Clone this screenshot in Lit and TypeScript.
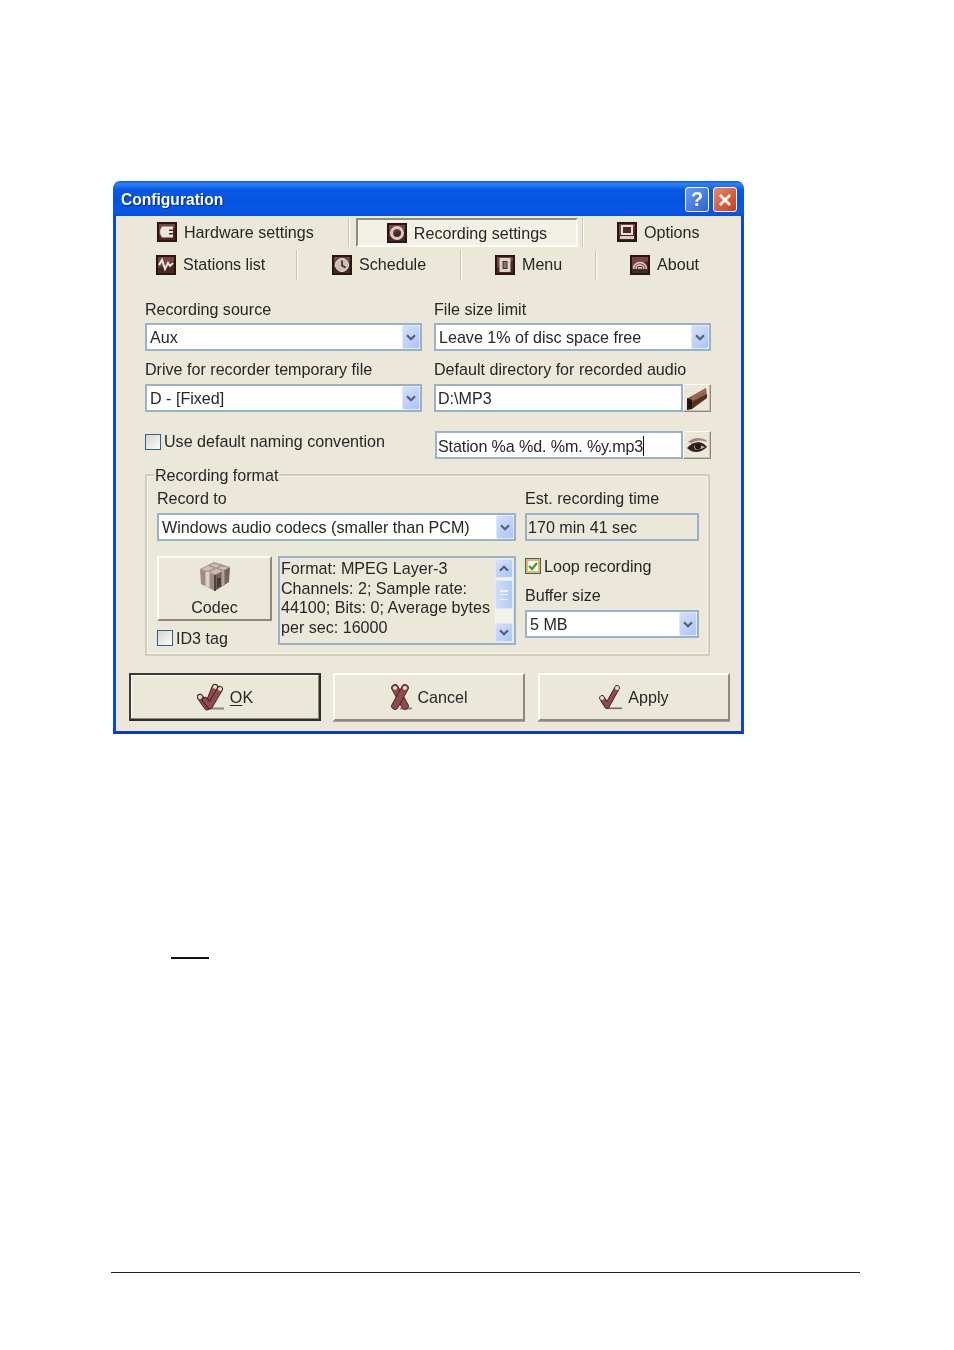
import { LitElement, html, css, svg } from "lit";
import { customElement } from "lit/decorators.js";

const frame = (glyph: unknown) => html`<svg class="ico" width="20" height="20" viewBox="0 0 20 20">
  <rect x="0.5" y="0.5" width="19" height="19" fill="#2c1717" stroke="#241414"/>
  <rect x="2" y="2" width="16" height="16" fill="#7a4343"/>
  <path d="M2 13 L18 6 V18 H2Z" fill="#4c2525"/>
  ${glyph}
</svg>`;

const glyphs: Record<string, unknown> = {
  plug: svg`<path d="M5 4.5 H16 V7.5 H12 V9 H16 V11 H12 V12.5 H16 V15.5 H5 Q3 13 3 10 Q3 7 5 4.5Z" fill="#eee6dc"/>`,
  pulse: svg`<path d="M3 10 L6 5 L9 14 L12 8 L14 11 L17 8" fill="none" stroke="#f0e8e0" stroke-width="2"/>`,
  ring: svg`<circle cx="10" cy="10" r="5.5" fill="none" stroke="#ddc9c3" stroke-width="3"/><circle cx="10" cy="10" r="2.2" fill="#4a2a2a"/>`,
  clock: svg`<circle cx="10" cy="10" r="6.5" fill="#cbbcb6" stroke="#e8e0d8"/><path d="M10 5.5 V10.5 L13.5 12.5" fill="none" stroke="#3d2222" stroke-width="1.6"/>`,
  monitor: svg`<rect x="4" y="3" width="12" height="10" fill="#e8e2d8"/><rect x="6" y="5" width="8" height="6" fill="#4a2a2a"/><rect x="3" y="14" width="14" height="3" fill="#d8cfc4"/>`,
  page: svg`<rect x="4.5" y="3" width="11" height="14" fill="#ddd3c4"/><rect x="7.5" y="6" width="5" height="8" fill="#4b3030"/><path d="M8.5 8 H11.5 M8.5 10 H11.5 M8.5 12 H11.5" stroke="#c9bdb0"/>`,
  arcs: svg`<path d="M3.5 15 A6.5 6.5 0 0 1 16.5 15 M6 15 A4 4 0 0 1 14 15 M8.5 15 A1.5 1.5 0 0 1 11.5 15" transform="translate(0 -1)" fill="none" stroke="#ddd0c8" stroke-width="1.6"/>`,
};

const chevron = html`<svg width="10" height="7" viewBox="0 0 10 7"><path d="M1 1.2 L5 5.2 L9 1.2" fill="none" stroke="#4d6185" stroke-width="2.2"/></svg>`;
const chevronUp = html`<svg width="10" height="7" viewBox="0 0 10 7"><path d="M1 5.8 L5 1.8 L9 5.8" fill="none" stroke="#4d6185" stroke-width="2.2"/></svg>`;

const cube = html`<svg width="34" height="32" viewBox="0 0 34 32">
  <path d="M2 9 L17 15 L17 31 L3 24Z" fill="#9f8b83"/>
  <path d="M17 15 L32 7 L31 22 L17 31Z" fill="#75625e"/>
  <path d="M2 9 L16 2 L32 7 L17 15Z" fill="#a8948c"/>
  <path d="M4 9 L10 6 L16 8 L10 11Z M12 5 L16 3.5 L22 5.5 L18 7.5Z M12 12 L18 9 L24 11 L17 14Z M20 8 L24 6.5 L30 7.5 L26 10Z" fill="#cdbfb8"/>
  <path d="M9.5 12 V27.5" stroke="#dcd3cd" stroke-width="4"/>
  <path d="M25 11 V26" stroke="#b0a29c" stroke-width="3"/>
  <path d="M17 15 V31" stroke="#3f3230" stroke-width="1.5"/>
  <path d="M19 18 H23 V26 L19 28Z" fill="#4a3b38"/>
</svg>`;

const folder = html`<svg width="22" height="24" viewBox="0 0 22 24">
  <path d="M2 12 L20 2 L21 10 L6 18 L2 14Z" fill="#875644"/>
  <path d="M6 10 L20 3 V5 L6 12Z M6 13 L20 6 V7.5 L6 14.5Z" fill="#a0705e"/>
  <path d="M6 16 L21 8 V12 L6 23Z" fill="#54301f"/>
  <path d="M1 12 L6 14 L6 23 L1 24Z" fill="#1f1512"/>
</svg>`;

const eye = html`<svg width="22" height="18" viewBox="0 0 22 18">
  <path d="M2 6 Q10 -1 20 4 L21 6 Q13 2.5 5 7Z" fill="#a8827a"/>
  <path d="M1 12 Q6 6 13 6 Q18 7 21 11 Q16 16 10 16 Q5 16 1 12Z" fill="#35211f"/>
  <path d="M8 10 Q13 8 19 11 Q14 14.5 9 13.5Z" fill="#c8bcb4"/>
  <ellipse cx="12" cy="10.8" rx="3" ry="2.8" fill="#241614"/>
</svg>`;

const stick = (d: string, w = 5) => svg`<path d="${d}" fill="none" stroke="#2e1616" stroke-width="${w + 1.5}" stroke-linecap="round" stroke-linejoin="round"/><path d="${d}" fill="none" stroke="#8f4b4b" stroke-width="${w}" stroke-linecap="round" stroke-linejoin="round"/>`;

const okIcon = html`<svg class="bico" width="28" height="28" viewBox="0 0 28 28">
  <rect x="12" y="24.5" width="15" height="2" fill="#888"/>
  ${stick("M3 14 L10 24 L18 4", 5)}
  ${stick("M8 17 L13 23 L23 6", 4.5)}
  <circle cx="18" cy="4" r="2" fill="#eadcd4"/><circle cx="23" cy="6" r="2" fill="#eadcd4"/><circle cx="3" cy="14" r="2" fill="#eadcd4"/>
</svg>`;

const cancelIcon = html`<svg class="bico" width="22" height="27" viewBox="0 0 22 27">
  <rect x="10" y="23.5" width="12" height="2" fill="#888"/>
  ${stick("M5 4 L15 22", 6)}
  ${stick("M15 4 L5 22", 6)}
  <circle cx="5" cy="4" r="2" fill="#eadcd4"/><circle cx="15" cy="4" r="2" fill="#eadcd4"/>
</svg>`;

const applyIcon = html`<svg class="bico" width="24" height="27" viewBox="0 0 24 27">
  <rect x="8" y="23.5" width="15" height="1.6" fill="#666"/>
  ${stick("M3 14 L8 22 L18 4", 4)}
  <circle cx="18" cy="4" r="2" fill="#eadcd4"/><circle cx="3" cy="14" r="2" fill="#eadcd4"/>
</svg>`;

@customElement("app-root")
export class AppRoot extends LitElement {
  static styles = css`
    :host { display: block; width: 954px; height: 1350px; background: #fff; font-family: "Liberation Sans", Arial, sans-serif; font-size: 16.1px; color: #262626; overflow: hidden; }
    .page { padding-top: 181px; }
    .win { margin-left: 113px; width: 631px; height: 553px; display: flex; flex-direction: column; filter: blur(0.4px); }
    .title { height: 35px; flex: none; display: flex; align-items: center; padding: 2px 7px 0 8px; box-sizing: border-box; border-radius: 7px 7px 0 0; background: linear-gradient(#0a5ae6 0, #2f83f4 8%, #0a58e2 25%, #0553e0 60%, #0758e8 85%, #0a4fd2 100%); color: #fff; font-weight: 700; font-size: 15.6px; text-shadow: 1px 1px 1px #0a2a80; }
    .title .name { flex: 1; }
    .tb { width: 24px; height: 25px; border-radius: 3px; border: 1px solid #fff; box-sizing: border-box; margin-left: 4px; display: flex; align-items: center; justify-content: center; font-size: 20px; font-weight: 700; text-shadow: none; }
    .help { background: linear-gradient(135deg, #6a9bf2, #2c62d8); }
    .close { background: linear-gradient(135deg, #e98a6d, #c43c17); }
    .client { flex: 1; display: flex; flex-direction: column; border: 3px solid #0b47d8; border-top: 0; border-bottom-color: #0a3bc0; background: #ebe8da; }
    .tabrow { display: flex; }
    .r1 { height: 32px; }
    .r1 .tab span { padding-top: 1px; }
    .r2 { height: 33px; }
    .tab { display: flex; align-items: center; gap: 7px; flex: none; box-sizing: border-box; }
    .sep { width: 2px; flex: none; background: #c9c6b6; border-right: 1px solid #fbfaf3; box-sizing: border-box; margin: 2px 0 1px; }
    .active { margin: 2px 4px 1px 6px; width: 222px; justify-content: center; gap: 7px; background: #f3f1e6; border: 2px solid; border-color: #8f8c7d #fbfaf4 #fbfaf4 #8f8c7d; padding-top: 1px; }
    .ico { flex: none; }
    .form { padding: 19px 30px 0 29px; display: grid; grid-template-columns: 277px 277px; column-gap: 12px; }
    .cell { display: flex; flex-direction: column; }
    .lbl { line-height: 19px; height: 18px; white-space: nowrap; }
    .field { height: 28px; box-sizing: border-box; border: 2px solid #9ab2c9; background: #fff; display: flex; align-items: center; padding: 1px 0 0 3px; white-space: nowrap; }
    .field .txt { flex: 1; overflow: hidden; }
    .tight { padding-left: 2px; }
    .tighter { padding-left: 1px; letter-spacing: -0.12px; }
    .est { background: transparent; padding-left: 1px; }
    .arrow { width: 18px; height: 24px; margin-top: -1px; flex: none; box-sizing: border-box; border: 1px solid #dfe7f8; border-radius: 2px; background: linear-gradient(135deg, #d5e0fb, #aec4f5); display: flex; align-items: center; justify-content: center; }
    .mt5 { margin-top: 5px; }
    .mt6 { margin-top: 6px; }
    .mt9 { margin-top: 9px; }
    .mt12 { margin-top: 12px; }
    .inputrow { display: flex; }
    .inputrow .field { flex: 1; }
    .side { width: 28px; flex: none; height: 28px; box-sizing: border-box; background: #ebe8da; border: 1px solid; border-color: #fbfaf4 #8d8a7b #8d8a7b #fbfaf4; box-shadow: inset -1px -1px 0 #c6c3b3; display: flex; align-items: center; justify-content: center; }
    .third { margin-top: 19px; }
    .inputrow.third { margin-left: 1px; }
    .third.left { flex-direction: row; align-items: center; height: 21px; gap: 3px; }
    .caret { display: inline-block; width: 1px; height: 20px; background: #111; vertical-align: -4px; }
    .chk { width: 16px; height: 16px; flex: none; box-sizing: border-box; border: 1.5px solid #2d6392; background: linear-gradient(135deg, #d6d4ca, #fdfdfb); }
    .chk.on { background: #fff; box-shadow: inset 0 0 0 2px #f3b44c; display: flex; align-items: center; justify-content: center; }
    .group { position: relative; margin: 15px 31px 0 29px; height: 182px; box-sizing: border-box; border: 2px solid #d0cdbd; box-shadow: 0 0 0 1px #f6f5ec inset; padding: 13px 9px 0 10px; display: grid; grid-template-columns: 359px 174px; column-gap: 9px; }
    .legend { position: absolute; left: 7px; top: -10px; padding: 0 1px; background: #ebe8da; line-height: 18px; }
    .lower { display: grid; grid-template-columns: 115px 238px; column-gap: 6px; margin-top: 15px; }
    .codec-col { display: flex; flex-direction: column; }
    .codec { height: 65px; box-sizing: border-box; border: 2px solid; border-color: #fbfaf4 #8d8a7b #8d8a7b #fbfaf4; display: flex; flex-direction: column; align-items: center; padding-top: 2px; gap: 6px; line-height: 18px; }
    .id3 { display: flex; align-items: center; gap: 3px; margin-top: 8px; line-height: 18px; }
    .list { height: 89px; box-sizing: border-box; border: 2px solid #9ab2c9; padding: 1px 0 0 1px; display: flex; line-height: 19.6px; }
    .list .t { flex: 1; min-width: 0; white-space: nowrap; }
    .sb { width: 18px; flex: none; margin: 0 1px 1px 0; display: flex; flex-direction: column; background: #f4f3ea; }
    .sb .b { height: 19px; box-sizing: border-box; border: 1px solid #dfe7f8; border-radius: 2px; background: linear-gradient(135deg, #d5e0fb, #aec4f5); display: flex; align-items: center; justify-content: center; flex: none; }
    .thumb { height: 29px; margin-top: 2px; box-sizing: border-box; border: 1px solid #dfe7f8; border-radius: 2px; background: linear-gradient(90deg, #cfdcfa, #b5c9f6); display: flex; align-items: center; justify-content: center; flex: none; }
    .thumb i { width: 8px; height: 8px; border-top: 1px solid #eef3fd; border-bottom: 1px solid #eef3fd; background: linear-gradient(#eef3fd 0 1px, transparent 1px 3px, #eef3fd 3px 4px, transparent 4px); }
    .sp { flex: 1; }
    .right { display: flex; flex-direction: column; }
    .loop { display: flex; align-items: center; gap: 3px; margin-top: 17px; height: 16px; }
    .btns { display: flex; gap: 12px; padding-left: 13px; margin-top: 17px; }
    .btn { width: 192px; height: 48px; flex: none; box-sizing: border-box; display: flex; align-items: center; justify-content: center; gap: 5px; border: 2px solid; border-color: #fbfaf4 #8d8a7b #8d8a7b #fbfaf4; box-shadow: 0 1px 0 #a9a697; }
    .btn span { padding-top: 1px; }
    .btn.def { border-color: #3a3a36 #2e2e2a #2e2e2a #3a3a36; box-shadow: inset -1px -1px 0 #8d8a7b, inset 1px 1px 0 #fbfaf4; }
    .btn:nth-child(3) { margin-left: 1px; }
    u { text-underline-offset: 2px; }
    .mark { width: 38px; height: 2px; background: #111; margin: 223px 0 0 171px; }
    .foot { width: 749px; height: 1px; background: #222; margin: 313px 0 0 111px; }
  `;

  private tab(icon: string, label: string, pad: number, w: number) {
    return html`<div class="tab" style="padding-left:${pad}px;width:${w}px">${frame(glyphs[icon])}<span>${label}</span></div>`;
  }

  private select(text: string) {
    return html`<div class="field"><span class="txt">${text}</span><span class="arrow">${chevron}</span></div>`;
  }

  render() {
    return html`
      <div class="page">
        <div class="win">
          <div class="title">
            <span class="name">Configuration</span>
            <span class="tb help">?</span>
            <span class="tb close"><svg width="14" height="14" viewBox="0 0 14 14"><path d="M2 2 L12 12 M12 2 L2 12" stroke="#fff" stroke-width="2.6"/></svg></span>
          </div>
          <div class="client">
            <div class="tabrow r1">
              ${this.tab("plug", "Hardware settings", 41, 232)}
              <span class="sep"></span>
              <div class="tab active">${frame(glyphs.ring)}<span>Recording settings</span></div>
              <span class="sep"></span>
              ${this.tab("monitor", "Options", 33, 150)}
            </div>
            <div class="tabrow r2">
              ${this.tab("pulse", "Stations list", 40, 180)}
              <span class="sep"></span>
              ${this.tab("clock", "Schedule", 34, 162)}
              <span class="sep"></span>
              ${this.tab("page", "Menu", 33, 133)}
              <span class="sep"></span>
              ${this.tab("arcs", "About", 33, 140)}
            </div>
            <div class="form">
              <div class="cell">
                <div class="lbl">Recording source</div>
                <div class="mt5">${this.select("Aux")}</div>
                <div class="lbl mt9">Drive for recorder temporary file</div>
                <div class="mt6">${this.select("D - [Fixed]")}</div>
                <div class="cell third left"><span class="chk"></span><span>Use default naming convention</span></div>
              </div>
              <div class="cell">
                <div class="lbl">File size limit</div>
                <div class="mt5">${this.select("Leave 1% of disc space free")}</div>
                <div class="lbl mt9">Default directory for recorded audio</div>
                <div class="inputrow mt6"><div class="field tight"><span class="txt">D:\\MP3</span></div><span class="side">${folder}</span></div>
                <div class="inputrow third"><div class="field tighter"><span class="txt">Station %a %d. %m. %y.mp3<span class="caret"></span></span></div><span class="side">${eye}</span></div>
              </div>
            </div>
            <div class="group">
              <span class="legend">Recording format</span>
              <div class="cell">
                <div class="lbl">Record to</div>
                <div class="mt6">${this.select("Windows audio codecs (smaller than PCM)")}</div>
                <div class="lower">
                  <div class="codec-col">
                    <div class="codec">${cube}<span>Codec</span></div>
                    <div class="id3"><span class="chk"></span><span>ID3 tag</span></div>
                  </div>
                  <div class="list">
                    <div class="t">Format: MPEG Layer-3<br />Channels: 2; Sample rate:<br />44100; Bits: 0; Average bytes<br />per sec: 16000</div>
                    <div class="sb">
                      <span class="b">${chevronUp}</span>
                      <span class="thumb"><i></i></span>
                      <span class="sp"></span>
                      <span class="b">${chevron}</span>
                    </div>
                  </div>
                </div>
              </div>
              <div class="right">
                <div class="lbl">Est. recording time</div>
                <div class="field est mt6"><span class="txt">170 min 41 sec</span></div>
                <div class="loop"><span class="chk on"><svg width="12" height="12" viewBox="0 0 12 12"><path d="M2 6 L5 9 L10 3" fill="none" stroke="#22a52e" stroke-width="2.2"/></svg></span><span>Loop recording</span></div>
                <div class="lbl mt12">Buffer size</div>
                <div class="mt6">${this.select("5 MB")}</div>
              </div>
            </div>
            <div class="btns">
              <div class="btn def">${okIcon}<span><u>O</u>K</span></div>
              <div class="btn">${cancelIcon}<span>Cancel</span></div>
              <div class="btn">${applyIcon}<span>Apply</span></div>
            </div>
          </div>
        </div>
        <div class="mark"></div>
        <div class="foot"></div>
      </div>
    `;
  }
}
